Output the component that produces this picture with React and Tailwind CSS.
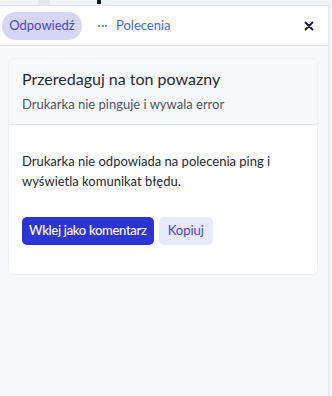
export default function App() {
  return (
    <div className="w-[332px] h-[396px] bg-[#f3f4f6] overflow-hidden relative" style={{ fontFamily: 'Lato, "Noto Sans", sans-serif' }}>
      {/* underlying page peeking out */}
      <div className="h-[5px] flex">
        <div className="ml-[38px] w-[12px] h-[5px] bg-[#e5e7eb]" />
        <div className="ml-[47px] w-[4px] h-[4px] bg-[#111827]" />
      </div>
      <div className="flex h-[391px]">
        <div className="w-[329px] h-full bg-[#f8f9fb] border-t border-r border-[#e3e5e8] flex flex-col">
          {/* header */}
          <div className="h-[40px] bg-white border-b border-[#e3e5e8] flex items-center pl-[2px] pr-[14px]">
            <div className="h-[28px] w-[80px] rounded-full bg-[#d5d7f8] text-[#4a45d6] text-[13px] flex items-center justify-center">
              Odpowiedź
            </div>
            <div className="ml-[16px] flex items-center text-[13px] text-[#3b6ff0]">
              <span className="flex gap-[1.5px] mr-[9px]">
                <span className="w-[2px] h-[2px] rounded-full bg-[#3b6ff0]" />
                <span className="w-[2px] h-[2px] rounded-full bg-[#3b6ff0]" />
                <span className="w-[2px] h-[2px] rounded-full bg-[#3b6ff0]" />
              </span>
              Polecenia
            </div>
            <div className="ml-auto">
              <svg width="10" height="10" viewBox="0 0 10 10" fill="none" stroke="#111827" strokeWidth="1.8" strokeLinecap="round">
                <path d="M1.5 1.5l7 7M8.5 1.5l-7 7" />
              </svg>
            </div>
          </div>
          {/* card */}
          <div className="mt-[12px] ml-[8px] w-[310px] bg-white rounded-[6px] border border-[#eef0f3] overflow-hidden">
            <div className="bg-[#f8f9fb] px-[13px] pt-[8px] pb-[10px] border-b border-[#e6e8eb]">
              <div className="text-[16px] leading-[24px] text-[#1f2937]">Przeredaguj na ton powazny</div>
              <div className="mt-[3px] text-[13px] leading-[20px] text-[#4b5563]">Drukarka nie pinguje i wywala error</div>
            </div>
            <div className="px-[13px] pt-[26px] pb-[29px]">
              <p className="text-[13px] leading-[20px] text-[#1f2937] max-w-[258px]">
                Drukarka nie odpowiada na polecenia ping i wyświetla komunikat błędu.
              </p>
              <div className="mt-[26px] flex gap-[5px]">
                <button className="h-[28px] px-[7px] rounded-[5px] bg-[#2c34d3] text-white text-[13px] font-medium tracking-[-0.3px]">
                  Wklej jako komentarz
                </button>
                <button className="h-[28px] px-[9px] rounded-[5px] bg-[#e7e9fd] text-[#4a45d6] text-[13px]">
                  Kopiuj
                </button>
              </div>
            </div>
          </div>
        </div>
        <div className="flex-1 bg-[#f3f4f6]" />
      </div>
    </div>
  );
}
